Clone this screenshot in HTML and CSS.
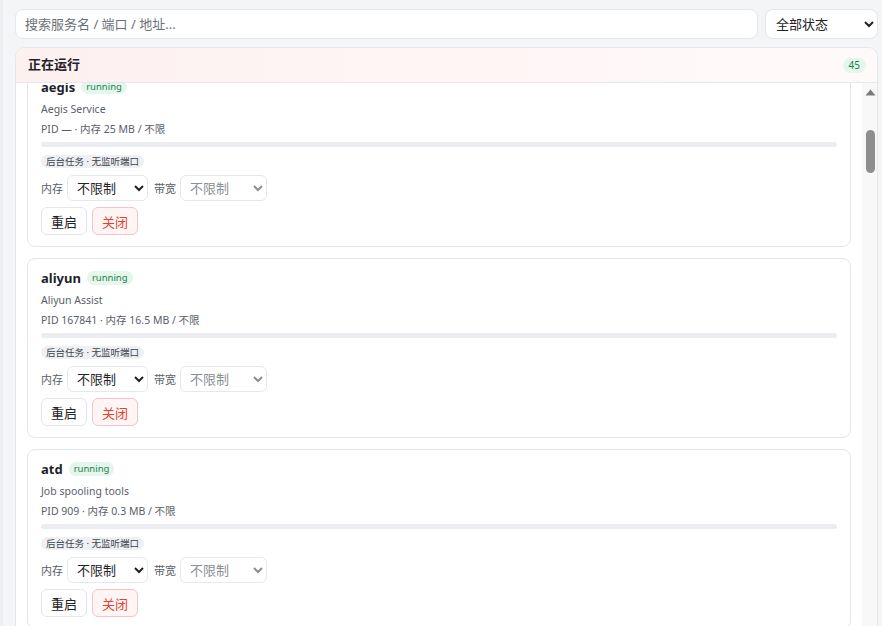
FILE: index.html
```html
<!DOCTYPE html>
<html>
<head>
	<meta charset="utf-8">
	<title>服务</title>
	<link rel="stylesheet" href="styles.css">
</head>
<body>
	<div class="page">
		<div class="toolbar">
			<input class="search" type="text" placeholder="搜索服务名 / 端口 / 地址...">
			<select class="filter">
				<option>全部状态</option>
				<option>正在运行</option>
				<option>已停止</option>
			</select>
		</div>

		<div class="panel">
			<div class="panelHead">
				<h2>正在运行</h2>
				<span class="count">45</span>
			</div>
			<div class="listWrap">
				<div class="list" id="list"></div>
				<div class="rail">
					<svg class="arrow" width="11" height="7" viewBox="0 0 11 7"><path d="M0.5 6.5h10L5.5 0.5z" fill="#7a7a7a"/></svg>
					<div class="thumb"></div>
				</div>
			</div>
		</div>
	</div>

	<script>
		const services = [
			['accounts-daemon', 'Accounts Service', '812', '6.1'],
			['acpid', 'ACPI event daemon', '774', '0.4'],
			['aegis', 'Aegis Service', '—', '25'],
			['aliyun', 'Aliyun Assist', '167841', '16.5'],
			['atd', 'Job spooling tools', '909', '0.3'],
			['chronyd', 'NTP client/server', '761', '1.8'],
			['cloud-init', 'Initial cloud-init job', '702', '2.2'],
			['containerd', 'containerd container runtime', '1102', '48.6'],
			['cron', 'Regular background program processing daemon', '905', '0.9'],
			['dbus', 'D-Bus System Message Bus', '768', '3.4'],
			['docker', 'Docker Application Container Engine', '1240', '82.3'],
			['getty@tty1', 'Getty on tty1', '930', '0.6'],
			['irqbalance', 'irqbalance daemon', '779', '1.1'],
			['multipathd', 'Device-Mapper Multipath Device Controller', '512', '17.9'],
			['networkd-dispatcher', 'Dispatcher daemon for systemd-networkd', '781', '12.7'],
			['nginx', 'A high performance web server', '1311', '9.8'],
			['polkit', 'Authorization Manager', '786', '7.5'],
			['rsyslog', 'System Logging Service', '789', '4.2'],
			['serial-getty@ttyS0', 'Serial Getty on ttyS0', '934', '0.5'],
			['snapd', 'Snap Daemon', '791', '21.4'],
			['ssh', 'OpenBSD Secure Shell server', '1003', '5.6'],
			['systemd-journald', 'Journal Service', '356', '31.2'],
			['systemd-logind', 'User Login Management', '795', '4.8'],
			['systemd-networkd', 'Network Service', '640', '6.3'],
			['systemd-resolved', 'Network Name Resolution', '702', '9.1'],
			['systemd-timesyncd', 'Network Time Synchronization', '668', '2.9'],
			['systemd-udevd', 'Rule-based Manager for Device Events', '389', '5.0'],
			['udisks2', 'Disk Manager', '798', '10.3'],
			['unattended-upgrades', 'Unattended Upgrades Shutdown', '880', '19.7'],
			['user@0', 'User Manager for UID 0', '1422', '8.2'],
			['mysql', 'MySQL Community Server', '1512', '356'],
			['redis-server', 'Advanced key-value store', '1530', '11.4'],
			['php8.1-fpm', 'The PHP 8.1 FastCGI Process Manager', '1544', '27.6'],
			['fail2ban', 'Fail2Ban Service', '1561', '22.8'],
			['postfix', 'Postfix Mail Transport Agent', '1580', '3.7'],
			['ModemManager', 'Modem Manager', '801', '9.6'],
			['packagekit', 'PackageKit Daemon', '1602', '14.2'],
			['qemu-guest-agent', 'QEMU Guest Agent', '640', '1.4'],
			['haveged', 'Entropy Daemon based on the HAVEGE algorithm', '508', '3.3'],
			['lvm2-lvmpolld', 'LVM2 poll daemon', '512', '1.2'],
			['uuidd', 'Daemon for generating UUIDs', '1622', '0.8'],
			['upower', 'Daemon for power management', '1640', '6.4'],
			['thermald', 'Thermal Daemon Service', '1655', '4.1'],
			['wpa_supplicant', 'WPA supplicant', '1671', '5.9'],
			['zabbix-agent', 'Zabbix Agent', '1690', '7.2']
		];

		const list = document.getElementById('list');

		services.forEach(s => {
			const card = document.createElement('div');
			card.className = 'card';
			card.innerHTML =
				'<div class="cardTitle"><b>' + s[0] + '</b><span class="state">running</span></div>' +
				'<p class="desc">' + s[1] + '</p>' +
				'<p class="meta">PID ' + s[2] + ' · 内存 ' + s[3] + ' MB / 不限</p>' +
				'<div class="bar"></div>' +
				'<span class="tag">后台任务 · 无监听端口</span>' +
				'<div class="limits">' +
					'<label>内存</label><select class="memSel"><option>不限制</option><option>256 MB</option><option>512 MB</option></select>' +
					'<label>带宽</label><select class="netSel" disabled><option>不限制</option></select>' +
				'</div>' +
				'<div class="actions"><button>重启</button><button class="stop">关闭</button></div>';
			list.appendChild(card);
		});

		// start a little way down the list
		list.scrollTop = 410;
	</script>
</body>
</html>
```

FILE: styles.css
```css
*{
	margin: 0;
	padding: 0;
	box-sizing: border-box;
}

html, body{
	height: 100%;
	overflow: hidden;
}

body{
	background-color: #f4f5f7;
	border-left: 3px solid #eceef1;
	font: normal 13px "Noto Sans", "Noto Sans CJK SC", sans-serif;
	color: #1f2329;
}

.page{
	padding: 9px 4px 0 12px;
}

.toolbar{
	display: flex;
	gap: 7px;
}

.search{
	flex: 1;
	height: 30px;
	padding: 0 9px;
	border: 1px solid #e3e6ea;
	border-radius: 8px;
	background: #fff;
	font: normal 13px "Noto Sans", "Noto Sans CJK SC", sans-serif;
	color: #1f2329;
	outline: none;
}

.search::placeholder{
	color: #6b7078;
}

.filter{
	width: 113px;
	height: 30px;
	padding: 0 6px;
	border: 1px solid #e3e6ea;
	border-radius: 8px;
	background: #fff;
	font: normal 13px "Noto Sans", "Noto Sans CJK SC", sans-serif;
	color: #1f2329;
}

.panel{
	margin-top: 8px;
	border: 1px solid #e3e6ea;
	border-radius: 10px 10px 0 0;
	background: #fff;
	overflow: hidden;
}

.panelHead{
	display: flex;
	align-items: center;
	justify-content: space-between;
	height: 35px;
	padding: 0 11px 0 12px;
	border-bottom: 1px solid #e6e8ec;
	background: linear-gradient(90deg, #fdf1f0, #fffafa);
}

.panelHead h2{
	margin-top: -3px;
	font-size: 13px;
	font-weight: bold;
	color: #1f2329;
}

.count{
	padding: 0 6px;
	border-radius: 8px;
	background: #e5f6ea;
	font-size: 10px;
	line-height: 15px;
	color: #1b7f54;
}

.listWrap{
	display: flex;
	height: 600px;
}

.list{
	flex: 1;
	overflow: hidden;
	padding: 12px 11px;
	display: flex;
	flex-direction: column;
	gap: 11px;
}

/* fake scrollbar, the real one is hidden in the screenshot browser */
.rail{
	width: 15px;
	display: flex;
	flex-direction: column;
	align-items: center;
	background: #f8f8f8;
}

.arrow{
	margin-top: 6px;
	margin-left: 1px;
}

.thumb{
	width: 9px;
	height: 43px;
	margin-top: 34px;
	margin-left: 1px;
	border-radius: 5px;
	background: #8e8e8e;
}

.card{
	flex: none;
	border: 1px solid #e3e6ea;
	border-radius: 8px;
	padding: 11px 13px;
	background: #fff;
}

.cardTitle{
	display: flex;
	align-items: center;
	gap: 6px;
	height: 16px;
}

.cardTitle b{
	font-size: 13px;
	color: #1f2329;
}

.state{
	padding: 0 5px;
	border-radius: 8px;
	background: #e5f6ea;
	font-size: 9.5px;
	line-height: 14px;
	color: #1b7f54;
}

.desc, .meta{
	font-size: 10.5px;
	line-height: 16px;
	color: #5a6069;
}

.desc{
	margin-top: 6px;
}

.meta{
	margin-top: 4px;
}

.bar{
	height: 5px;
	margin-top: 5px;
	border-radius: 3px;
	background: #ecedf0;
}

.tag{
	display: inline-block;
	margin-top: 8px;
	padding: 0 5px;
	border-radius: 7px;
	background: #eef0f3;
	font-size: 9.5px;
	line-height: 13px;
	color: #3d434b;
	vertical-align: top;
}

.limits{
	display: flex;
	align-items: center;
	gap: 4px;
	margin-top: 7px;
}

.limits label{
	font-size: 11px;
	color: #5a6069;
}

.limits select{
	height: 26px;
	padding: 0 5px;
	border: 1px solid #e6e8ec;
	border-radius: 6px;
	background: #fff;
	font: normal 13px "Noto Sans", "Noto Sans CJK SC", sans-serif;
	color: #1f2329;
}

.memSel{
	width: 81px;
	margin-right: 2px;
}

.netSel{
	width: 87px;
}

.limits select:disabled{
	color: #8a8f96;
	opacity: 1;
}

.actions{
	display: flex;
	gap: 5px;
	margin-top: 6px;
}

.actions button{
	height: 28px;
	padding: 0 9px;
	border: 1px solid #e3e6ea;
	border-radius: 6px;
	background: #fff;
	font: normal 13px "Noto Sans", "Noto Sans CJK SC", sans-serif;
	color: #1f2329;
}

.actions button.stop{
	border-color: #f5c4c4;
	background: #fff5f5;
	color: #e5432f;
}
```
